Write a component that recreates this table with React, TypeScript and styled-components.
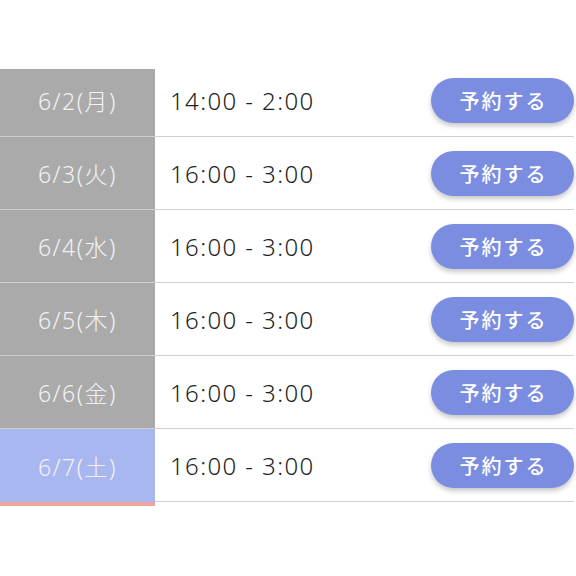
import styled, { createGlobalStyle } from "styled-components";

interface Slot {
  date: string;
  time: string;
  today?: boolean;
}

const SLOTS: Slot[] = [
  { date: "6/2(月)", time: "14:00 - 2:00" },
  { date: "6/3(火)", time: "16:00 - 3:00" },
  { date: "6/4(水)", time: "16:00 - 3:00" },
  { date: "6/5(木)", time: "16:00 - 3:00" },
  { date: "6/6(金)", time: "16:00 - 3:00" },
  { date: "6/7(土)", time: "16:00 - 3:00", today: true },
];

const GlobalStyle = createGlobalStyle`
  body {
    margin: 0;
    background: #fff;
    font-family: "Noto Sans", "Noto Sans CJK JP", sans-serif;
  }
`;

function App() {
  return (
    <>
      <GlobalStyle />
      <Page>
        <Schedule>
          {SLOTS.map((slot, i) => (
            <Row key={slot.date}>
              <DateCell $today={slot.today} $first={i === 0}>
                {slot.date}
              </DateCell>
              <TimeCell>{slot.time}</TimeCell>
              <ReserveButton>予約する</ReserveButton>
            </Row>
          ))}
        </Schedule>
      </Page>
    </>
  );
}

const Page = styled.div`
  width: 576px;
  height: 576px;
  padding-top: 64px;
  box-sizing: border-box;
`;

const Schedule = styled.div`
  display: flex;
  flex-direction: column;
  width: 574px;
`;

const Row = styled.div`
  display: flex;
  align-items: center;
  height: 73px;
  border-bottom: 1px solid #cfcfcf;
  box-sizing: border-box;
`;

const DateCell = styled.div<{ $today?: boolean; $first?: boolean }>`
  align-self: stretch;
  width: 155px;
  flex: none;
  display: flex;
  align-items: center;
  justify-content: center;
  background: ${(p) => (p.$today ? "#a9b7f1" : "#aaaaaa")};
  color: #f2f2f2;
  font-size: 23px;
  font-weight: 300;
  letter-spacing: 1.5px;
  box-sizing: border-box;
  margin-top: ${(p) => (p.$first ? "5px" : "0")};
  padding-bottom: ${(p) => (p.$first ? "5px" : "0")};
  margin-bottom: ${(p) => (p.$today ? "-1px" : "0")};
  box-shadow: ${(p) => (p.$today ? "0 4px 0 #f0a4a0" : "none")};
`;

const TimeCell = styled.div`
  flex: 1;
  padding-left: 15px;
  font-size: 24px;
  font-weight: 300;
  letter-spacing: 1.4px;
  color: #222;
`;

const ReserveButton = styled.button`
  width: 143px;
  height: 45px;
  border: none;
  border-radius: 23px;
  background: #7b8de0;
  color: #fff;
  font-family: "Noto Sans CJK JP", sans-serif;
  font-size: 20px;
  font-weight: 500;
  letter-spacing: 2px;
  padding: 0 0 0 2px;
  box-shadow: 0 3px 5px rgba(0, 0, 0, 0.22);
  cursor: pointer;
`;

export default App;
